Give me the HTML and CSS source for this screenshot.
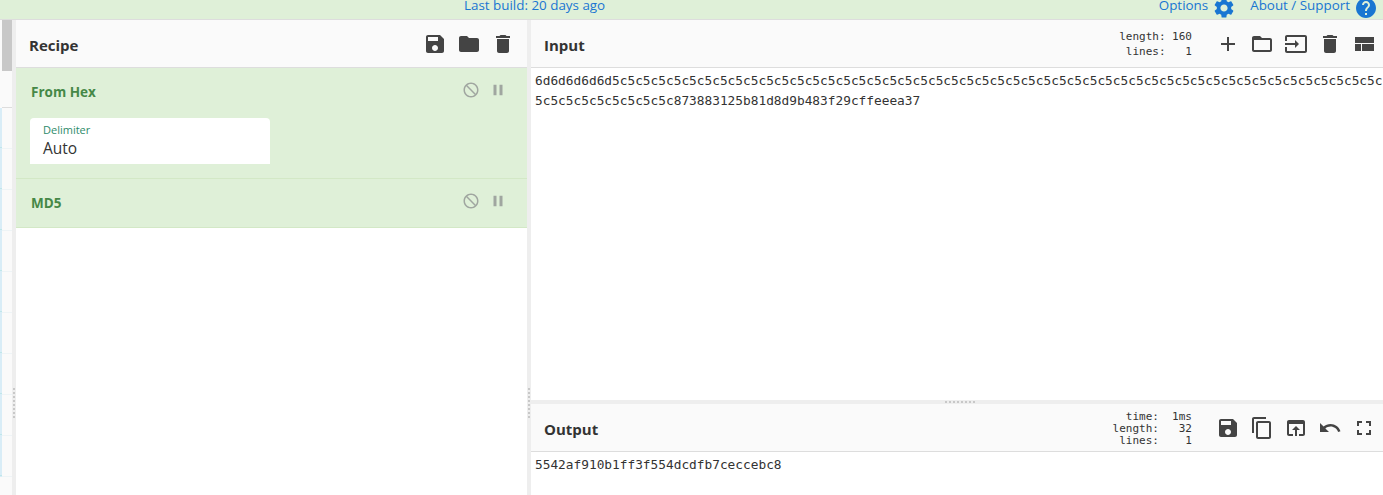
FILE: index.html
```html
<!DOCTYPE html>
<html lang="en">
<head>
<meta charset="utf-8">
<title>CyberChef</title>
<link rel="stylesheet" href="styles.css">
</head>
<body>
<svg class="defs" aria-hidden="true">
  <symbol id="i-save" viewBox="0 0 24 24"><path d="M17 3H5c-1.11 0-2 .9-2 2v14c0 1.1.89 2 2 2h14c1.1 0 2-.9 2-2V7l-4-4zm-5 16c-1.66 0-3-1.34-3-3s1.34-3 3-3 3 1.34 3 3-1.34 3-3 3zm3-10H5V5h10v4z"/></symbol>
  <symbol id="i-folder" viewBox="0 0 24 24"><path d="M10 4H4c-1.1 0-1.99.9-1.99 2L2 18c0 1.1.9 2 2 2h16c1.1 0 2-.9 2-2V8c0-1.1-.9-2-2-2h-8l-2-2z"/></symbol>
  <symbol id="i-delete" viewBox="0 0 24 24"><path d="M6 19c0 1.1.9 2 2 2h8c1.1 0 2-.9 2-2V7H6v12zM19 4h-3.5l-1-1h-5l-1 1H5v2h14V4z"/></symbol>
  <symbol id="i-add" viewBox="0 0 24 24"><path d="M19 13h-6v6h-2v-6H5v-2h6V5h2v6h6v2z"/></symbol>
  <symbol id="i-folder-open" viewBox="0 0 24 24"><path d="M20 6h-8l-2-2H4c-1.1 0-1.99.9-1.99 2L2 18c0 1.1.9 2 2 2h16c1.1 0 2-.9 2-2V8c0-1.1-.9-2-2-2zm0 12H4V8h16v10z"/></symbol>
  <symbol id="i-input" viewBox="0 0 24 24"><path d="M21 3.01H3c-1.1 0-2 .9-2 2V9h2V4.99h18v14.03H3V15H1v4.01c0 1.1.9 1.98 2 1.98h18c1.1 0 2-.88 2-1.98v-14c0-1.11-.9-2-2-2zM11 16l4-4-4-4v3H1v2h10v3z"/></symbol>
  <symbol id="i-layout" viewBox="0 0 24 24"><path d="M3 19h6v-7H3v7zm7 0h12v-7H10v7zM3 5v6h19V5H3z"/></symbol>
  <symbol id="i-settings" viewBox="0 0 24 24"><path d="M19.14 12.94c.04-.3.06-.61.06-.94 0-.32-.02-.64-.07-.94l2.03-1.58c.18-.14.23-.41.12-.61l-1.92-3.32c-.12-.22-.37-.29-.59-.22l-2.39.96c-.5-.38-1.03-.7-1.62-.94l-.36-2.54c-.04-.24-.24-.41-.48-.41h-3.84c-.24 0-.43.17-.47.41l-.36 2.54c-.59.24-1.13.57-1.62.94l-2.39-.96c-.22-.08-.47 0-.59.22L2.74 8.87c-.12.21-.08.47.12.61l2.03 1.58c-.05.3-.09.63-.09.94s.02.64.07.94l-2.03 1.58c-.18.14-.23.41-.12.61l1.92 3.32c.12.22.37.29.59.22l2.39-.96c.5.38 1.03.7 1.62.94l.36 2.54c.05.24.24.41.48.41h3.84c.24 0 .44-.17.47-.41l.36-2.54c.59-.24 1.13-.56 1.62-.94l2.39.96c.22.08.47 0 .59-.22l1.92-3.32c.12-.22.07-.47-.12-.61l-2.01-1.58zM12 15.6c-1.98 0-3.6-1.62-3.6-3.6s1.62-3.6 3.6-3.6 3.6 1.62 3.6 3.6-1.62 3.6-3.6 3.6z"/></symbol>
  <symbol id="i-help" viewBox="0 0 24 24"><path d="M12 2C6.48 2 2 6.48 2 12s4.48 10 10 10 10-4.48 10-10S17.52 2 12 2zm1 17h-2v-2h2v2zm2.07-7.75l-.9.92C13.45 12.9 13 13.5 13 15h-2v-.5c0-1.1.45-2.1 1.17-2.83l1.24-1.26c.37-.36.59-.86.59-1.41 0-1.1-.9-2-2-2s-2 .9-2 2H8c0-2.21 1.79-4 4-4s4 1.79 4 4c0 .88-.36 1.68-.93 2.25z"/></symbol>
  <symbol id="i-copy" viewBox="0 0 24 24"><path d="M16 1H4c-1.1 0-2 .9-2 2v14h2V3h12V1zm3 4H8c-1.1 0-2 .9-2 2v14c0 1.1.9 2 2 2h11c1.1 0 2-.9 2-2V7c0-1.1-.9-2-2-2zm0 16H8V7h11v14z"/></symbol>
  <symbol id="i-open" viewBox="0 0 24 24"><path d="M19 4H5c-1.11 0-2 .9-2 2v12c0 1.1.89 2 2 2h4v-2H5V8h14v10h-4v2h4c1.1 0 2-.9 2-2V6c0-1.1-.89-2-2-2zm-7 6l-4 4h3v6h2v-6h3l-4-4z"/></symbol>
  <symbol id="i-undo" viewBox="0 0 24 24"><path d="M12.5 8c-2.65 0-5.05.99-6.9 2.6L2 7v9h9l-3.62-3.62c1.39-1.16 3.16-1.88 5.12-1.88 3.54 0 6.55 2.31 7.6 5.5l2.37-.78C21.08 11.03 17.15 8 12.5 8z"/></symbol>
  <symbol id="i-full" viewBox="0 0 24 24"><path d="M7 14H5v5h5v-2H7v-3zm-2-4h2V7h3V5H5v5zm12 7h-3v2h5v-5h-2v3zM14 5v2h3v3h2V5h-5z"/></symbol>
  <symbol id="i-block" viewBox="0 0 24 24"><path d="M12 2C6.48 2 2 6.48 2 12s4.48 10 10 10 10-4.48 10-10S17.52 2 12 2zM4 12c0-4.42 3.58-8 8-8 1.85 0 3.55.63 4.9 1.69L5.69 16.9C4.63 15.55 4 13.85 4 12zm8 8c-1.85 0-3.55-.63-4.9-1.69L18.31 7.1C19.37 8.45 20 10.15 20 12c0 4.42-3.58 8-8 8z" transform="matrix(-1 0 0 1 24 0)"/></symbol>
  <symbol id="i-pause" viewBox="0 0 24 24"><path d="M6 19h4V5H6v14zm8-14v14h4V5h-4z"/></symbol>
</svg>

<header class="banner">
  <span class="build">Last build: 20 days ago</span>
  <div class="banner-links">
    <a class="banner-link">Options <svg class="banner-icon"><use href="#i-settings"/></svg></a>
    <a class="banner-link">About / Support <svg class="banner-icon"><use href="#i-help"/></svg></a>
  </div>
</header>

<main class="workspace">
  <aside class="ops">
    <div class="ops-list">
      <div class="ops-thumb"></div>
      <div class="ops-row"></div>
      <div class="ops-row ops-row-blue"></div>
      <div class="ops-row ops-row-blue"></div>
      <div class="ops-row ops-row-blue"></div>
      <div class="ops-row ops-row-blue"></div>
      <div class="ops-row ops-row-blue"></div>
      <div class="ops-row ops-row-blue"></div>
      <div class="ops-row ops-row-blue"></div>
      <div class="ops-row ops-row-blue"></div>
      <div class="ops-row ops-row-blue"></div>
    </div>
    <div class="gutter"><span class="dots"></span></div>
  </aside>

  <section class="recipe">
    <div class="pane-head recipe-head">
      <h2 class="pane-title">Recipe</h2>
      <div class="tools">
        <svg class="tool"><use href="#i-save"/></svg>
        <svg class="tool"><use href="#i-folder"/></svg>
        <svg class="tool"><use href="#i-delete"/></svg>
      </div>
    </div>
    <div class="op op-args">
      <div class="op-head">
        <span class="op-name">From Hex</span>
        <div class="op-ctrls">
          <svg class="ctrl"><use href="#i-block"/></svg>
          <svg class="ctrl"><use href="#i-pause"/></svg>
        </div>
      </div>
      <div class="field">
        <span class="field-label">Delimiter</span>
        <span class="field-value">Auto</span>
      </div>
    </div>
    <div class="op">
      <div class="op-head">
        <span class="op-name">MD5</span>
        <div class="op-ctrls">
          <svg class="ctrl"><use href="#i-block"/></svg>
          <svg class="ctrl"><use href="#i-pause"/></svg>
        </div>
      </div>
    </div>
  </section>

  <div class="gutter"><span class="dots"></span></div>

  <section class="io">
    <div class="pane-head io-head">
      <h2 class="pane-title">Input</h2>
      <div class="stats stats-input">length: 160<br>&nbsp;lines:&nbsp;&nbsp;&nbsp;1</div>
      <div class="tools io-tools">
        <svg class="tool"><use href="#i-add"/></svg>
        <svg class="tool"><use href="#i-folder-open"/></svg>
        <svg class="tool"><use href="#i-input"/></svg>
        <svg class="tool"><use href="#i-delete"/></svg>
        <svg class="tool"><use href="#i-layout"/></svg>
      </div>
    </div>
    <div class="text-area input-area">6d6d6d6d6d5c5c5c5c5c5c5c5c5c5c5c5c5c5c5c5c5c5c5c5c5c5c5c5c5c5c5c5c5c5c5c5c5c5c5c5c5c5c5c5c5c5c5c5c5c5c5c5c5c5c5c5c5c5c5c5c5c5c5c873883125b81d8d9b483f29cffeeea37</div>
    <div class="h-gutter"><span class="h-dots"></span></div>
    <div class="pane-head io-head">
      <h2 class="pane-title">Output</h2>
      <div class="stats stats-output">&nbsp;&nbsp;time:&nbsp;&nbsp;1ms<br>length:&nbsp;&nbsp;&nbsp;32<br>&nbsp;lines:&nbsp;&nbsp;&nbsp;&nbsp;1</div>
      <div class="tools io-tools">
        <svg class="tool"><use href="#i-save"/></svg>
        <svg class="tool"><use href="#i-copy"/></svg>
        <svg class="tool"><use href="#i-open"/></svg>
        <svg class="tool"><use href="#i-undo"/></svg>
        <svg class="tool"><use href="#i-full"/></svg>
      </div>
    </div>
    <div class="text-area output-area">5542af910b1ff3f554dcdfb7ceccebc8</div>
  </section>
</main>
</body>
</html>
```
FILE: styles.css
```css
* { box-sizing: border-box; }
html, body { margin: 0; height: 100%; }
body {
  width: 1383px;
  height: 495px;
  overflow: hidden;
  display: flex;
  flex-direction: column;
  background: #fff;
  font-family: "Open Sans", "Liberation Sans", sans-serif;
  color: #333;
}
.defs { display: none; }

.banner {
  height: 20px;
  flex: none;
  background: #dff0d8;
  border-bottom: 1px solid #ddd;
  display: flex;
  justify-content: flex-end;
  position: relative;
  overflow: hidden;
  color: #1976d2;
  font-size: 13.4px;
  line-height: 10px;
}
.build { position: absolute; left: 464px; top: 0; }
.banner-links { display: flex; gap: 14px; padding-right: 5px; }
.banner-link { display: flex; gap: 4px; height: 19px; }
.banner-icon { width: 24px; height: 24px; fill: #1976d2; margin-top: -4px; }

.workspace { flex: 1; display: flex; min-height: 0; }

.ops { width: 16px; flex: none; display: flex; }
.ops-list { width: 12px; background: #fafafa; display: flex; flex-direction: column; padding-left: 2px; position: relative; overflow: hidden; }
.ops-thumb { width: 10px; height: 51px; background: #c8c8c8; flex: none; }
.ops-row { height: 37px; width: 10px; border-bottom: 1px solid #ddd; flex: none; }
.ops-row-blue { height: 41px; position: relative; border-bottom-color: #eef4f6; }
.ops-row-blue::before { content: ""; position: absolute; left: -2px; top: 0; bottom: -1px; width: 2px; background: linear-gradient(to bottom, #d9edf7 0 39px, #bfe6ea 39px 40px, #d9edf7 40px); }

.gutter { width: 4px; flex: none; background: #eee; position: relative; }
.dots {
  position: absolute;
  left: 1px;
  top: 368px;
  width: 2px;
  height: 30px;
  background: repeating-linear-gradient(to bottom, #c8c8c8 0 2px, transparent 2px 4px);
}

.recipe { width: 511px; flex: none; background: #fff; display: flex; flex-direction: column; }

.pane-head {
  height: 48px;
  flex: none;
  background: #fafafa;
  border-bottom: 1px solid #ddd;
  display: flex;
  align-items: center;
}
.recipe-head { padding: 0 7px 0 13px; justify-content: space-between; }
.io-head { padding: 0 2px 0 13px; }
.pane-title { margin: 0; font-size: 15px; font-weight: 700; color: #333; line-height: 20px; position: relative; top: 1px; }

.tools { display: flex; }
.tool { width: 34px; height: 24px; fill: #444; }
.io-tools { margin-left: 19px; }

.stats {
  margin-left: auto;
  font-family: "DejaVu Sans Mono", "Liberation Mono", monospace;
  font-size: 11px;
  color: #333;
  white-space: pre;
}
.stats-input { line-height: 15px; }
.stats-output { line-height: 12px; padding-top: 2px; }

.op {
  background: #dff0d8;
  border-bottom: 1px solid #d3e8c6;
  height: 49px;
  flex: none;
  padding: 0 15px;
}
.op-args { height: 111px; }
.op-head { display: flex; justify-content: space-between; height: 50px; padding-top: 14px; }
.op-name { font-size: 13.5px; font-weight: 700; color: #468847; line-height: 20px; }
.op-ctrls { display: flex; gap: 9px; padding-right: 5px; margin-top: -1px; }
.ctrl { width: 18px; height: 18px; fill: #a0a6a0; }

.field {
  width: 240px;
  height: 46px;
  margin-left: -1px;
  background: #fff;
  border-radius: 4px 4px 0 0;
  padding: 4px 13px 0;
  display: flex;
  flex-direction: column;
}
.field-label { font-size: 11px; line-height: 15px; color: #2e8b6a; }
.field-value { font-size: 15.5px; line-height: 22px; color: #333; }

.io { flex: 1; min-width: 0; display: flex; flex-direction: column; }
.text-area {
  font-family: "DejaVu Sans Mono", "Liberation Mono", monospace;
  font-size: 12.8px;
  line-height: 20px;
  color: #333;
  padding: 3px 0 0 4px;
  word-break: break-all;
}
.input-area { height: 332px; flex: none; }
.output-area { flex: 1; }

.h-gutter { height: 4px; flex: none; background: #eee; position: relative; }
.h-dots {
  position: absolute;
  left: 414px;
  top: 1px;
  width: 32px;
  height: 2px;
  background: repeating-linear-gradient(to right, #c8c8c8 0 2px, transparent 2px 4px);
}
```
